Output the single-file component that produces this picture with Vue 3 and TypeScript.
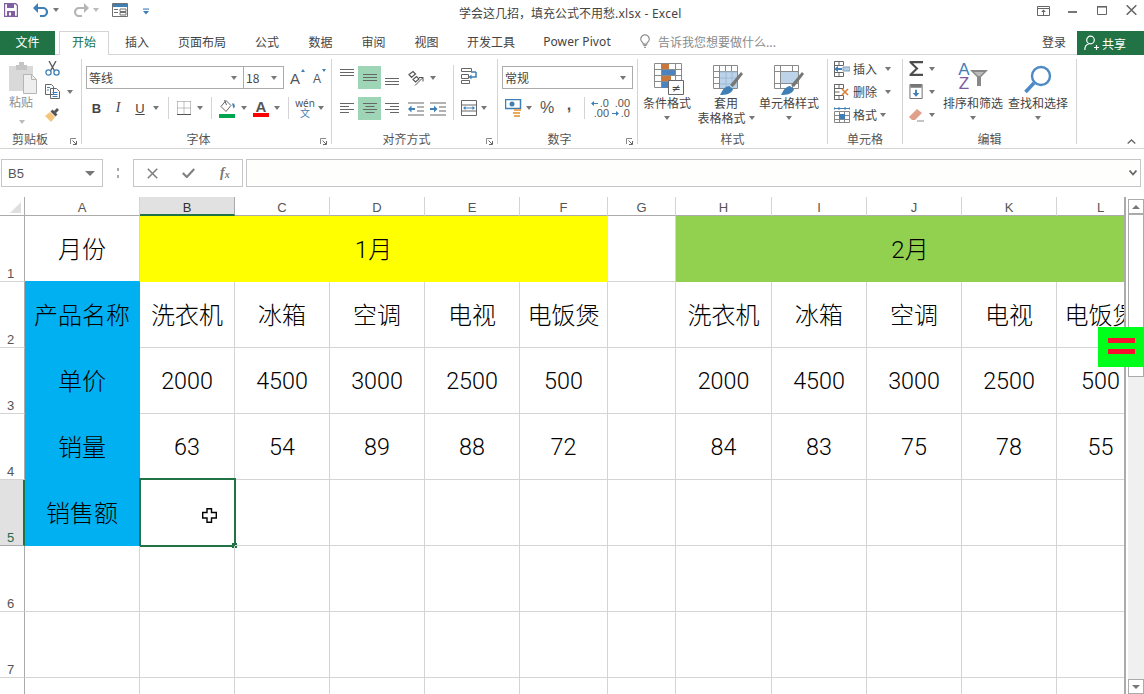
<script setup lang="ts">
interface Cell { t: string; cls: string }

const letters: string[] = ['A', 'B', 'C', 'D', 'E', 'F', 'G', 'H', 'I', 'J', 'K', 'L']
const tabs: { t: string; cls: string }[] = [
  { t: '插入', cls: 'w54' },
  { t: '页面布局', cls: 'w76' },
  { t: '公式', cls: 'w54' },
  { t: '数据', cls: 'w53' },
  { t: '审阅', cls: 'w53' },
  { t: '视图', cls: 'w53' },
  { t: '开发工具', cls: 'w76' },
  { t: 'Power Pivot', cls: 'w96 latin' }
]

const valueCell = (t: string): Cell => ({ t, cls: /^\d+$/.test(t) ? 'num' : '' })

function dataRow(head: string, vals: string[]): Cell[] {
  const cells: Cell[] = [{ t: head, cls: 'blue' }]
  vals.slice(0, 5).forEach((t) => cells.push(valueCell(t)))
  cells.push({ t: '', cls: '' })
  vals.slice(5).forEach((t) => cells.push(valueCell(t)))
  return cells
}
const blank = (): Cell[] => letters.map(() => ({ t: '', cls: '' }))

const products = ['洗衣机', '冰箱', '空调', '电视', '电饭煲']
const rows: Cell[][] = [
  [
    { t: '月份', cls: 'a1' },
    { t: '1月', cls: 'yellow span5' },
    { t: '', cls: '' },
    { t: '2月', cls: 'green span5' }
  ],
  dataRow('产品名称', [...products, ...products]),
  dataRow('单价', ['2000', '4500', '3000', '2500', '500', '2000', '4500', '3000', '2500', '500']),
  dataRow('销量', ['63', '54', '89', '88', '72', '84', '83', '75', '78', '55']),
  [{ t: '销售额', cls: 'blue' }, { t: '', cls: 'selected' }, ...blank().slice(2)],
  blank(),
  blank(),
  blank()
]
</script>

<template>
  <div class="app">
    <header class="titlebar">
      <div class="qat">
        <svg class="q-save" viewBox="0 0 14 14"><path d="M.5.5h11l2 2v11H.5z" fill="#fff" stroke="#80609f" stroke-width="1.4" /><path d="M3 1h7v4H3zM3 8h8v5H3z" fill="#80609f" /><path d="M5 9.5h2v3H5z" fill="#fff" /></svg>
        <svg class="q-undo" viewBox="0 0 15 14"><path d="M4 5h6a4 4 0 0 1 0 8H7" fill="none" stroke="#3f7fb5" stroke-width="2.200" /><path d="M0 5l5-5v10z" fill="#3f7fb5" /></svg>
        <i class="dd q-d1"></i>
        <svg class="q-redo" viewBox="0 0 15 14"><path d="M11 5H5a4 4 0 0 0 0 8h3" fill="none" stroke="#b5b5b5" stroke-width="2.200" /><path d="M15 5l-5-5v10z" fill="#b5b5b5" /></svg>
        <i class="dd light q-d2"></i>
        <svg class="q-form" viewBox="0 0 16 14"><path d="M.5.5h15v13H.5z" fill="#fff" stroke="#707070" /><path d="M1 1h14v3H1z" fill="#3f7fb5" /><path d="M2 6.500h4M2 9.500h4M8 6h6v2.500H8zM8 9.500h6V12H8z" fill="none" stroke="#707070" /></svg>
        <svg class="q-more" viewBox="0 0 7 7"><path d="M0 0h7v1.300H0z" fill="#3f7fb5" /><path d="M0 3h7L3.500 7z" fill="#3f7fb5" /></svg>
      </div>
      <div class="doc-title">学会这几招，填充公式不用愁<span class="doc-ext">.xlsx - Excel</span></div>
      <div class="win">
        <svg class="w-rib" viewBox="0 0 13 10"><path d="M.5.5h12v9H.5zM1 2.500h11" fill="none" stroke="#666" /><path d="M6.500 3.500l2.500 2.500H7v3H6V6H4z" fill="#666" /></svg>
        <svg class="w-min" viewBox="0 0 9 2"><path d="M0 0h9v2H0z" fill="#777" /></svg>
        <svg class="w-max" viewBox="0 0 10 9"><path d="M.5.5h9v8h-9z" fill="none" stroke="#666" /><path d="M0 0h10v1.600H0z" fill="#666" /></svg>
        <svg class="w-close" viewBox="0 0 11 10"><path d="M.7.3l9.600 9.400M10.300 .3L.7 9.700" fill="none" stroke="#666" stroke-width="1.600" /></svg>
      </div>
    </header>

    <nav class="tabs">
      <div class="file">文件</div>
      <div class="tab-on">开始</div>
      <div v-for="tab in tabs" :key="tab.t" class="tab" :class="tab.cls">{{ tab.t }}</div>
      <svg class="bulb" viewBox="0 0 10 14"><path d="M5 .7a4.300 4.300 0 0 0-2.400 7.800c.4.4.6 1 .6 1.600h3.600c0-.6.2-1.200.6-1.600A4.300 4.300 0 0 0 5 .7z" fill="none" stroke="#888" stroke-width="1.100" /><path d="M3.400 11.500h3.200M4 13.300h2" stroke="#888" /></svg>
      <div class="tell">告诉我您想要做什么...</div>
      <div class="login">登录</div>
      <div class="share">
        <svg class="share-ic" viewBox="0 0 15 16"><circle cx="6.500" cy="5" r="3.800" fill="none" stroke="#fff" stroke-width="1.200" /><path d="M.8 15c0-3.400 2-5.600 4-6M10 12.500h5M12.500 10v5" fill="none" stroke="#fff" stroke-width="1.200" /></svg>
        <span>共享</span>
      </div>
    </nav>

    <section class="ribbon">
      <!-- clipboard -->
      <div class="group g-clip">
        <div class="body clip-body">
          <div class="paste">
            <svg class="paste-ic" viewBox="0 0 28 32"><path d="M0 4h24v25H0z" fill="#d9d9d9" /><path d="M7 3h3V0h5v3h3v5H7z" fill="#c4c4c4" /><path d="M14.500 12.500h8l5 5v14h-13z" fill="#eee" stroke="#b5b5b5" /><path d="M22.500 12.500v5h5" fill="none" stroke="#b5b5b5" /></svg>
            <span class="paste-t">粘贴</span>
            <i class="dd light paste-d"></i>
          </div>
          <div class="clip-tools">
            <svg class="ic15" viewBox="0 0 15 15"><path d="M4 0l5.600 10M11 0L5.400 10" stroke="#555" stroke-width="1.300" fill="none" /><circle cx="3.500" cy="11.500" r="2.600" fill="none" stroke="#3f7fb5" stroke-width="1.300" /><circle cx="11.500" cy="11.500" r="2.600" fill="none" stroke="#3f7fb5" stroke-width="1.300" /></svg>
            <div class="copy-row">
              <svg class="ic15" viewBox="0 0 15 15"><path d="M.5.500h6l2 2v8H.5zM5.500 4.500h6l3 3v7h-9z" fill="#fff" stroke="#666" /><path d="M2 3.500h3M2 6h2M7.500 8.500h5M7.500 10.500h5M7.500 12.500h5" stroke="#3f7fb5" /></svg>
              <i class="dd"></i>
            </div>
            <svg class="ic15" viewBox="0 0 15 15"><path d="M0 9l5-4 5 5-4 5z" fill="#f5c57c" /><path d="M5.500 4.500l5 5 2-2-5-5zM9 4l3-3 2 2-3 3z" fill="#555" /></svg>
          </div>
        </div>
        <div class="label pad20">剪贴板<svg class="launch" viewBox="0 0 7 7"><path d="M.5 6V.5H6" fill="none" stroke="#888" /><path d="M2.500 2.500L6 6M6.500 3v3.500H3" fill="none" stroke="#666" /></svg></div>
      </div>

      <!-- font -->
      <div class="group g-font">
        <div class="body">
          <div class="font-top">
            <div class="select font-name"><span>等线</span><i class="dd"></i></div>
            <div class="select font-size"><span>18</span><i class="dd"></i></div>
            <div class="grow"><span class="big-a">A</span><i class="up"></i></div>
            <div class="shrink"><span class="small-a">A</span><i class="down"></i></div>
          </div>
          <div class="font-row">
            <b class="fmt">B</b>
            <em class="fmt serif">I</em>
            <u class="fmt">U</u>
            <i class="dd"></i>
            <i class="vsep"></i>
            <svg class="ic14" viewBox="0 0 14 14"><path d="M.500 .500h13M.500 .500v13M13.500 .500v13M.500 7h13M7 .500v13" fill="none" stroke="#888" stroke-dasharray="1 1" /><path d="M0 13.500h14" stroke="#555" /></svg>
            <i class="dd"></i>
            <i class="vsep"></i>
            <div class="color">
              <svg class="ic16" viewBox="0 0 16 13"><path d="M2 7l5-6 5 5-5 6z" fill="#fff" stroke="#666" /><path d="M5.500 .500l2 5" stroke="#666" /><path d="M13 4h2l1 3-1.500 2z" fill="#3f7fb5" /></svg>
              <i class="bar bar-g"></i>
            </div>
            <i class="dd"></i>
            <div class="color">
              <span class="color-a">A</span>
              <i class="bar bar-r"></i>
            </div>
            <i class="dd"></i>
            <i class="vsep"></i>
            <div class="wen"><span class="wen-t">wén</span><span class="wen-c">文</span></div>
            <i class="dd"></i>
          </div>
        </div>
        <div class="label pad16">字体<svg class="launch" viewBox="0 0 7 7"><path d="M.5 6V.5H6" fill="none" stroke="#888" /><path d="M2.500 2.500L6 6M6.500 3v3.500H3" fill="none" stroke="#666" /></svg></div>
      </div>

      <!-- alignment -->
      <div class="group g-align">
        <div class="body align-body">
          <div class="align-left">
            <div class="al-row">
              <svg class="al" viewBox="0 0 14 23"><path d="M0 3.500h14M0 6.500h14M0 9.500h14" stroke="#666" fill="none" /></svg>
              <div class="al-on"><svg class="al" viewBox="0 0 14 23"><path d="M0 8.500h14M0 11.500h14M0 14.500h14" stroke="#666" fill="none" /></svg></div>
              <svg class="al" viewBox="0 0 14 23"><path d="M0 12.500h14M0 15.500h14M0 18.500h14" stroke="#666" fill="none" /></svg>
              <svg class="ic16" viewBox="0 0 16 16"><path d="M1 4.500l4-3 2.500 2.500-4 3.500zM5 9.500l3.500-3 2.500 2.500-3.500 3z" fill="none" stroke="#555" stroke-width="1.200" /><path d="M7 15.500l8-8M11 7.500h4V11.500" fill="none" stroke="#555" /></svg>
              <i class="dd dd-start"></i>
            </div>
            <div class="al-row">
              <svg class="al" viewBox="0 0 14 23"><path d="M0 6.500h14M0 9.500h9M0 12.500h14M0 15.500h9" stroke="#666" fill="none" /></svg>
              <div class="al-on"><svg class="al" viewBox="0 0 14 23"><path d="M0 6.500h14M2.500 9.500h9M0 12.500h14M2.500 15.500h9" stroke="#666" fill="none" /></svg></div>
              <svg class="al" viewBox="0 0 14 23"><path d="M0 6.500h14M5 9.500h9M0 12.500h14M5 15.500h9" stroke="#666" fill="none" /></svg>
              <svg class="ic16" viewBox="0 0 16 13"><path d="M0 .500h16M9 4.500h7M9 8.500h7M0 12.500h16" stroke="#666" fill="none" /><path d="M7 6.500H2" stroke="#3f7fb5" stroke-width="2" /><path d="M0 6.500l3.500-3.500v7z" fill="#3f7fb5" /></svg>
              <svg class="ic16" viewBox="0 0 16 13"><path d="M0 .500h16M9 4.500h7M9 8.500h7M0 12.500h16" stroke="#666" fill="none" /><path d="M0 6.500h5" stroke="#3f7fb5" stroke-width="2" /><path d="M7.500 6.500L4 3v7z" fill="#3f7fb5" /></svg>
            </div>
          </div>
          <i class="long-sep"></i>
          <div class="align-right">
            <svg class="ic16" viewBox="0 0 16 16"><path d="M.500 .500h10v3h-10zM.500 6.500h7v4h-7zM.500 12.500h8v3h-8z" fill="#fff" stroke="#666" /><path d="M10 4h5M15 4v5h-6" fill="none" stroke="#3f7fb5" stroke-width="1.500" /><path d="M7.500 9l3-2.500v5z" fill="#3f7fb5" /></svg>
            <div class="merge-row">
              <svg class="ic16" viewBox="0 0 16 16"><path d="M.500 .500h15v15H.500zM.500 5h15M.500 11h15" fill="#fff" stroke="#666" /><path d="M3 8h10" stroke="#3f7fb5" /><path d="M2 8l2.500-2v4zM14 8l-2.500-2v4z" fill="#3f7fb5" /></svg>
              <i class="dd"></i>
            </div>
          </div>
        </div>
        <div class="label pad16">对齐方式<svg class="launch" viewBox="0 0 7 7"><path d="M.5 6V.5H6" fill="none" stroke="#888" /><path d="M2.500 2.500L6 6M6.500 3v3.500H3" fill="none" stroke="#666" /></svg></div>
      </div>

      <!-- number -->
      <div class="group g-num">
        <div class="body">
          <div class="select num-sel"><span>常规</span><i class="dd"></i></div>
          <div class="num-row">
            <svg class="ic18" viewBox="0 0 18 18"><path d="M.500 .500h15v9h-15z" fill="#fff" stroke="#3f7fb5" stroke-width="1.500" /><circle cx="7" cy="5" r="2.500" fill="#3f7fb5" /><path d="M9 10h7v2H9zM8 13h7v2H8zM9 16h6v2H9z" fill="#eba85a" /></svg>
            <i class="dd"></i>
            <span class="pct">%</span>
            <span class="comma">,</span>
            <i class="vsep tall"></i>
            <div class="dec"><span>.0</span><span>.00</span><svg class="dec-arrow" viewBox="0 0 7 5"><path d="M0 2.500L3 0v5zM3 2h4v1H3z" fill="#3f7fb5" /></svg></div>
            <div class="dec"><span>.00</span><span>.0</span><svg class="dec-arrow lower" viewBox="0 0 7 5"><path d="M7 2.500L4 0v5zM0 2h4v1H0z" fill="#3f7fb5" /></svg></div>
          </div>
        </div>
        <div class="label pad16">数字<svg class="launch" viewBox="0 0 7 7"><path d="M.5 6V.5H6" fill="none" stroke="#888" /><path d="M2.500 2.500L6 6M6.500 3v3.500H3" fill="none" stroke="#666" /></svg></div>
      </div>

      <!-- styles -->
      <div class="group g-styles">
        <div class="body styles-body">
          <div class="col c58">
            <svg class="big off" viewBox="0 0 30 32"><path d="M.500 .500h27v24h-27zM.500 6.500h27M.500 12.500h27M.500 18.500h27M7.500 .500v24M14.500 .500v24M21.500 .500v24" fill="#fff" stroke="#8a8a8a" /><path d="M8 1h7v5H8zM8 13h9v5H8z" fill="#c9773c" /><path d="M8 7h13v5H8zM8 19h6v6H8z" fill="#4d82bc" /><path d="M14.500 17.500h15v14h-15z" fill="#fff" stroke="#666" /><text x="22" y="29" class="ne">≠</text></svg>
            <span class="cap">条件格式</span>
            <i class="dd cap-d"></i>
          </div>
          <div class="col c60">
            <svg class="big off" viewBox="0 0 30 32"><path d="M.500 2.500h24v23h-24zM.500 8.500h24M.500 14.500h24M.500 20.500h24M6.500 2.500v23M12.500 2.500v23M18.500 2.500v23" fill="#fff" stroke="#8a8a8a" /><path d="M7 9h17v16H7z" fill="#bcd3e9" /><path d="M7 9h17M7 15h17M7 21h17M13 9v16M19 9v16" stroke="#9fbbd6" fill="none" /><path d="M17 22l11-13 2 2-10 13z" fill="#777" /><path d="M7 32c2-3 3-8 9-9l4 3c-1 5-8 6-13 6z" fill="#3f7fb5" /></svg>
            <span class="cap">套用</span>
            <span class="cap cap-row">表格格式<i class="dd"></i></span>
          </div>
          <div class="col c66">
            <svg class="big" viewBox="0 0 30 32"><path d="M.500 2.500h24v23h-24zM.500 8.500h24M.500 20.500h24M6.500 2.500v23M18.500 2.500v23" fill="#fff" stroke="#8a8a8a" /><path d="M7 9h17v11H7z" fill="#bcd3e9" /><path d="M17 22l11-13 2 2-10 13z" fill="#777" /><path d="M7 32c2-3 3-8 9-9l4 3c-1 5-8 6-13 6z" fill="#3f7fb5" /></svg>
            <span class="cap">单元格样式</span>
            <i class="dd cap-d"></i>
          </div>
        </div>
        <div class="label">样式</div>
      </div>

      <!-- cells -->
      <div class="group g-cells">
        <div class="body cells-body">
          <div class="cell-row">
            <svg class="ic16" viewBox="0 0 16 16"><path d="M.500 .500h9v4h-9zM.500 11.500h9v4h-9zM.500 .500v15M5 .500v4M5 11.500v4" fill="#fff" stroke="#666" /><path d="M9 6h7v4H9z" fill="#b8cfe6" stroke="#7f9dbc" /><path d="M0 8l4-3v2h4v2H4v2z" fill="#3f7fb5" /></svg>
            <span class="cell-t">插入</span><i class="dd d-far"></i>
          </div>
          <div class="cell-row">
            <svg class="ic16" viewBox="0 0 16 16"><path d="M.500 .500h9v4h-9zM.500 11.500h9v4h-9zM.500 .500v15M5 .500v4M5 11.500v4M.500 8h5" fill="#fff" stroke="#666" /><path d="M8 5l6 6M14 5l-6 6" stroke="#d9843e" stroke-width="1.700" /></svg>
            <span class="cell-t">删除</span><i class="dd d-far"></i>
          </div>
          <div class="cell-row">
            <svg class="ic16" viewBox="0 0 16 16"><path d="M.500 4.500h15v11H.500zM.500 8.500h15M.500 12.500h15M5.500 4.500v11M10.500 4.500v11" fill="#fff" stroke="#888" /><path d="M5 7h6v5H5z" fill="#3f7fb5" /><path d="M0 1.500h16M0 0v3M16 0v3M5 0v3M11 0v3" stroke="#3f7fb5" /></svg>
            <span class="cell-t">格式</span><i class="dd d-near"></i>
          </div>
        </div>
        <div class="label">单元格</div>
      </div>

      <!-- editing -->
      <div class="group g-edit">
        <div class="body edit-body">
          <div class="edit-left">
            <div class="edit-row">
              <svg class="ic15" viewBox="0 0 15 15"><path d="M.5 0H14v2.200H4l5.500 5.300L4 12.800h10V15H.5v-1.800L6.500 7.500.5 1.800z" fill="#4d4d4d" /></svg>
              <i class="dd"></i>
            </div>
            <div class="edit-row">
              <svg class="ic15" viewBox="0 0 15 16"><path d="M.500 .500h13v15H.500z" fill="#fff" stroke="#666" /><path d="M1 1h12v3H1z" fill="#777" /><path d="M7 6v6" stroke="#3f7fb5" stroke-width="2" /><path d="M3.500 9.500h7L7 13.500z" fill="#3f7fb5" /></svg>
              <i class="dd"></i>
            </div>
            <div class="edit-row">
              <svg class="ic15" viewBox="0 0 15 15"><path d="M0 10l8-8 5 4-7 7H3z" fill="#e0a08a" /><path d="M8 14h7" stroke="#888" /></svg>
              <i class="dd"></i>
            </div>
          </div>
          <div class="col c60b">
            <div class="sort-ic">
              <div class="az"><span class="az-a">A</span><span class="az-z">Z</span></div>
              <svg class="funnel" viewBox="0 0 18 16"><path d="M0 0h18l-7 7v9H7V7z" fill="#888" /><path d="M4 2h10l-4 4H8z" fill="#bbb" /></svg>
            </div>
            <span class="cap">排序和筛选</span>
            <i class="dd cap-d"></i>
          </div>
          <div class="col c60c">
            <svg class="big" viewBox="0 0 30 32"><circle cx="18" cy="13" r="9" fill="none" stroke="#4d8ac4" stroke-width="2.400" /><path d="M11 20L2.500 29" stroke="#4d8ac4" stroke-width="3.600" /></svg>
            <span class="cap">查找和选择</span>
            <i class="dd cap-d"></i>
          </div>
        </div>
        <div class="label">编辑</div>
      </div>

      <div class="collapse-area">
        <svg class="collapse" viewBox="0 0 9 5"><path d="M.7 4.500L4.500 1l3.800 3.500" fill="none" stroke="#666" stroke-width="1.300" /></svg>
      </div>
    </section>

    <div class="fbar">
      <div class="namebox"><span>B5</span><i class="dd dark"></i></div>
      <div class="dots"><i></i><i></i></div>
      <div class="fbtns">
        <svg class="fb-x" viewBox="0 0 11 11"><path d="M.8.8l9.400 9.400M10.200 .8L.8 10.200" stroke="#808080" stroke-width="1.600" /></svg>
        <svg class="fb-v" viewBox="0 0 13 10"><path d="M.8 5l4 4 7.500-8" fill="none" stroke="#808080" stroke-width="2.200" /></svg>
        <span class="fx">f<sub>x</sub></span>
      </div>
      <div class="finput"><svg class="chev" viewBox="0 0 8 6"><path d="M.5.5l3.500 4 3.500-4" fill="none" stroke="#666" stroke-width="1.800" /></svg></div>
    </div>

    <div class="sheet">
      <div class="grid-wrap">
        <div class="grid">
          <div class="corner"><i class="tri"></i></div>
          <div v-for="(l, i) in letters" :key="l" class="colh" :class="{ on: i === 1 }">{{ l }}</div>
          <template v-for="(row, r) in rows" :key="r">
            <div class="rowh" :class="{ on: r === 4 }">{{ r + 1 }}</div>
            <div v-for="(c, k) in row" :key="k" class="cell" :class="c.cls">
              {{ c.t }}
              <div v-if="c.cls === 'selected'" class="sel-box">
                <i class="handle"></i>
                <svg class="cursor" viewBox="0 0 15 15"><path d="M5 .7h4.500v3.800h4.800V10H9.500v4.300H5V10H.7V4.500H5z" fill="#fff" stroke="#000" stroke-width="1.400" /></svg>
              </div>
            </div>
          </template>
        </div>
      </div>
      <div class="vscroll">
        <div class="sb-btn"><i class="sb-up"></i></div>
        <div class="sb-thumb"></div>
        <div class="sb-track"></div>
        <div class="sb-btn"><i class="sb-dn"></i></div>
      </div>
      <div class="equals"><i></i><i></i></div>
    </div>
  </div>
</template>

<style>
html, body { margin: 0; background: #fff; overflow: hidden; }
</style>

<style scoped>
.app {
  position: relative;
  width: 1144px;
  height: 694px;
  overflow: hidden;
  background: #fff;
  font-family: "Noto Sans CJK SC", "Noto Sans", sans-serif;
  font-size: 12px;
  color: #444;
}
i { display: block; }
svg { display: block; flex: none; }

/* dropdown caret */
.dd { width: 0; height: 0; border-left: 3.5px solid transparent; border-right: 3.5px solid transparent; border-top: 4px solid #777; flex: none; }
.dd.light { border-top-color: #bbb; }
.dd.dark { border-left-width: 5px; border-right-width: 5px; border-top-width: 5px; border-top-color: #777; }

/* title bar */
.titlebar { height: 28px; display: flex; align-items: flex-start; }
.qat { width: 459px; flex: none; height: 28px; display: flex; align-items: flex-start; }
.q-save { width: 14px; height: 14px; margin: 3px 0 0 4px; }
.q-undo { width: 15px; height: 14px; margin: 3px 0 0 15px; }
.q-d1 { margin: 8px 0 0 5px; }
.q-redo { width: 15px; height: 14px; margin: 3px 0 0 15px; }
.q-d2 { margin: 8px 0 0 4px; }
.q-form { width: 16px; height: 14px; margin: 3px 0 0 13px; }
.q-more { width: 6px; height: 7px; margin: 8px 0 0 15px; }
.doc-title { line-height: 28px; font-family: "Noto Sans", "Noto Sans CJK SC", sans-serif; font-size: 12px; color: #444; white-space: nowrap; }
.doc-ext { letter-spacing: .25px; }
.win { margin-left: auto; display: flex; align-items: flex-start; padding-right: 7px; }
.w-rib { width: 13px; height: 10px; margin-top: 6px; }
.w-min { width: 9px; height: 2px; margin: 11px 0 0 18px; }
.w-max { width: 10px; height: 9px; margin: 6px 0 0 20px; }
.w-close { width: 11px; height: 10px; margin: 5px 0 0 19px; }

/* tabs */
.tabs { height: 27px; display: flex; align-items: flex-end; box-sizing: border-box; border-bottom: 1px solid #d4d4d4; }
.file { width: 55px; height: 24px; margin-bottom: -1px; background: #217346; color: #fff; line-height: 22px; text-align: center; }
.tab-on { width: 50px; height: 24px; box-sizing: border-box; margin: 0 1px -1px 4px; border: 1px solid #d4d4d4; border-bottom: 0; background: #fff; color: #217346; line-height: 20px; text-align: center; }
.tab { height: 24px; line-height: 21px; text-align: center; margin-bottom: -1px; color: #444; white-space: nowrap; }
.w54 { width: 54px; } .w76 { width: 76px; } .w53 { width: 53px; } .w96 { width: 96px; }
.latin { font-family: "Noto Sans", sans-serif; letter-spacing: .1px; }
.bulb { width: 10px; height: 14px; margin: 0 0 6px 15px; }
.tell { margin-left: 8px; color: #8a8a8a; font-size: 12px; line-height: 21px; height: 24px; margin-bottom: -1px; white-space: nowrap; width: 120px; }
.login { margin-left: 264px; line-height: 21px; height: 24px; margin-bottom: -1px; }
.share { margin-left: 11px; width: 67px; height: 24px; margin-bottom: -1px; background: #217346; color: #fff; display: flex; align-items: center; box-sizing: border-box; padding-left: 7px; }
.share-ic { width: 15px; height: 16px; margin-right: 3px; }

/* ribbon */
.ribbon { height: 94px; box-sizing: border-box; border-bottom: 1px solid #d4d4d4; display: flex; align-items: flex-start; }
.group { height: 85px; margin-top: 4px; box-sizing: border-box; border-right: 1px solid #d4d4d4; display: flex; flex-direction: column; flex: none; position: relative; }
.body { height: 71px; flex: none; }
.label { height: 16px; line-height: 17px; text-align: center; color: #555; position: relative; }
.pad20 { padding-right: 21px; }
.pad16 { padding-right: 16px; }
.launch { position: absolute; width: 7px; height: 7px; right: 4px; top: 8px; }
.g-clip { width: 82px; }
.g-font { width: 250px; }
.g-align { width: 166px; }
.g-num { width: 140px; }
.g-styles { width: 190px; }
.g-cells { width: 75px; }
.g-edit { width: 174px; }
.ic14 { width: 14px; height: 14px; }
.ic15 { width: 15px; height: 15px; }
.ic16 { width: 16px; height: 16px; }
.ic18 { width: 18px; height: 18px; }

.clip-body { display: flex; }
.paste { width: 37px; padding-left: 9px; box-sizing: border-box; display: flex; flex-direction: column; align-items: flex-start; flex: none; }
.paste-ic { width: 28px; height: 32px; margin-top: 3px; }
.paste-t { line-height: 16px; color: #8f8f8f; }
.paste-d { margin: 10px 0 0 10px; }
.clip-tools { margin: 2px 0 0 8px; display: flex; flex-direction: column; gap: 8px; }
.copy-row { display: flex; align-items: center; gap: 7px; width: 30px; }

.font-top { display: flex; align-items: stretch; height: 23px; margin: 7px 0 0 4px; }
.select { box-sizing: border-box; border: 1px solid #ababab; display: flex; align-items: center; justify-content: space-between; background: #fff; height: 23px; padding: 0 6px 0 2px; }
.font-name { width: 158px; }
.font-size { width: 41px; margin-left: -1px; padding-left: 2px; }
.grow, .shrink { position: relative; }
.grow { width: 15px; margin-left: 6px; }
.shrink { width: 13px; margin-left: 8px; }
.big-a { font-family: "Liberation Sans", sans-serif; font-size: 15px; line-height: 25px; color: #555; }
.small-a { font-family: "Liberation Sans", sans-serif; font-size: 12px; line-height: 26px; color: #555; }
.up, .down { position: absolute; top: 3px; right: 0; width: 0; height: 0; border-left: 2.500px solid transparent; border-right: 2.500px solid transparent; }
.up { border-bottom: 3px solid #3f7fb5; }
.down { border-top: 3px solid #3f7fb5; }
.font-row { display: grid; grid-template-columns: 21px 22px 22px 9px 17px 14px 18px 4px 27px 8px 26px 6px 16px 18px 13px; justify-items: center; align-items: center; height: 24px; margin: 7px 0 0 4px; }
.fmt { font-family: "Liberation Sans", sans-serif; font-size: 13px; color: #444; font-style: normal; }
.serif { font-family: "Liberation Serif", serif; font-style: italic; font-size: 14px; }
.vsep { width: 1px; height: 22px; background: #d4d4d4; }
.color { display: flex; flex-direction: column; align-items: center; width: 16px; }
.bar { width: 16px; height: 4px; }
.bar-g { background: #00a64f; }
.bar-r { background: #ff0000; }
.color-a { font-family: "Liberation Sans", sans-serif; font-size: 15px; line-height: 13px; height: 13px; font-weight: 700; color: #555; }
.wen { display: flex; flex-direction: column; align-items: center; line-height: 10px; }
.wen-t { font-size: 10px; font-family: "Noto Sans", sans-serif; color: #555; }
.wen-c { font-size: 10px; color: #3f7fb5; }

.align-body { display: flex; padding: 6px 0 0 4px; box-sizing: border-box; }
.align-left { display: flex; flex-direction: column; gap: 8px; margin-top: 1px; }
.al-row { display: grid; grid-template-columns: 22px 23px 21px 27px 18px; justify-items: center; align-items: center; height: 23px; }
.al { width: 14px; height: 23px; }
.al-on { width: 23px; height: 23px; background: #9fd5b7; display: flex; justify-content: center; }
.dd-start { justify-self: start; margin-left: 1px; }
.long-sep { width: 1px; height: 55px; background: #d4d4d4; margin-left: 6px; }
.align-right { display: flex; flex-direction: column; margin: 3px 0 0 7px; width: 33px; gap: 16px; }
.merge-row { display: flex; align-items: center; gap: 4px; }

.num-sel { width: 131px; margin: 7px 0 0 4px; }
.num-row { display: grid; grid-template-columns: 23px 8px 28px 16px 14px 18px 24px; justify-items: center; align-items: center; height: 24px; margin: 7px 0 0 4px; }
.pct { font-family: "Liberation Sans", sans-serif; font-size: 16px; color: #555; }
.comma { font-family: "Liberation Sans", sans-serif; font-weight: 700; font-size: 16px; line-height: 14px; color: #555; margin-top: -6px; }
.tall { height: 22px; }
.dec { position: relative; width: 18px; display: flex; flex-direction: column; align-items: flex-end; font-family: "Liberation Sans", sans-serif; font-size: 11px; line-height: 10px; color: #555; }
.dec-arrow { position: absolute; left: 0; top: 3px; width: 7px; height: 5px; }
.dec-arrow.lower { top: 13px; }

.styles-body { display: flex; }
.col { display: flex; flex-direction: column; align-items: center; flex: none; }
.c58 { width: 58px; } .c60 { width: 60px; } .c66 { width: 66px; }
.big { width: 30px; height: 32px; margin-top: 4px; }
.big.off { margin-left: 4px; }
.cap { line-height: 15px; white-space: nowrap; color: #444; }
.cap-d { margin-top: 6px; }
.cap-row { display: flex; align-items: center; gap: 3px; }
.ne { font-family: "DejaVu Sans", sans-serif; font-size: 11px; text-anchor: middle; fill: #444; }

.cells-body { height: 71px; padding-left: 6px; box-sizing: border-box; }
.cell-row { display: flex; align-items: center; height: 23px; position: relative; top: -2px; }
.cell-t { margin-left: 3px; }
.d-far { margin-left: 8px; }
.d-near { margin-left: 3px; }

.edit-body { display: flex; }
.edit-left { width: 40px; padding: 2px 0 0 6px; box-sizing: border-box; display: flex; flex-direction: column; gap: 8px; flex: none; }
.edit-row { display: flex; align-items: center; gap: 5px; height: 15px; }
.c60b { width: 60px; } .c60c { width: 60px; margin-left: 5px; }
.sort-ic { display: flex; height: 32px; margin-top: 4px; width: 30px; }
.az { display: flex; flex-direction: column; align-items: center; font-family: "Liberation Sans", sans-serif; font-size: 17px; line-height: 14px; width: 12px; }
.az-a { color: #3f7fb5; }
.az-z { color: #7e5b9c; }
.funnel { width: 18px; height: 16px; margin-top: 7px; }
.collapse-area { flex: 1; display: flex; justify-content: flex-end; padding: 84px 8px 0 0; box-sizing: border-box; }
.collapse { width: 9px; height: 5px; }

/* formula bar */
.fbar { height: 48px; box-sizing: border-box; padding: 10px 0 0 1px; display: flex; align-items: flex-start; }
.namebox { width: 102px; height: 28px; box-sizing: border-box; border: 1px solid #c6c6c6; display: flex; align-items: center; justify-content: space-between; padding: 0 7px 0 6px; font-family: "Liberation Sans", sans-serif; font-size: 13px; color: #555; }
.dots { width: 30px; height: 28px; display: flex; flex-direction: column; align-items: center; justify-content: center; gap: 4px; }
.dots i { width: 2px; height: 3px; background: #aaa; }
.fbtns { width: 110px; height: 28px; box-sizing: border-box; border: 1px solid #c6c6c6; display: flex; align-items: center; padding-left: 13px; }
.fb-x { width: 11px; height: 11px; }
.fb-v { width: 13px; height: 10px; margin-left: 24px; }
.fx { font-family: "Liberation Serif", serif; font-style: italic; font-weight: 700; font-size: 14px; color: #777; margin-left: 25px; line-height: 14px; }
.fx sub { font-size: 10px; vertical-align: baseline; position: relative; top: 1px; }
.finput { width: 895px; height: 28px; margin-left: 3px; box-sizing: border-box; border: 1px solid #c6c6c6; background: #fefefc; display: flex; align-items: center; justify-content: flex-end; padding-right: 3px; }
.chev { width: 8px; height: 6px; }

/* sheet */
.sheet { height: 497px; display: flex; align-items: flex-start; overflow: hidden; }
.grid-wrap { width: 1126px; height: 497px; box-sizing: border-box; border-right: 2px solid #ababab; overflow: hidden; flex: none; }
.grid { display: grid; width: 1145px; grid-template-columns: 25px 115px 95px 95px 95px 95px 88px 68px 96px 95px 95px 95px 88px; grid-template-rows: 19px repeat(8, 66px); }
.corner { box-sizing: border-box; border-right: 1px solid #ababab; border-bottom: 1px solid #ababab; position: relative; }
.tri { position: absolute; right: 3px; bottom: 2px; width: 0; height: 0; border-left: 11px solid transparent; border-bottom: 11px solid #dfdfdf; }
.colh { box-sizing: border-box; border-right: 1px solid #d4d4d4; border-bottom: 1px solid #ababab; text-align: center; line-height: 22px; font-family: "Liberation Sans", sans-serif; font-size: 13px; color: #555; overflow: hidden; }
.colh.on { background: #e1e1e1; border-bottom: 2px solid #217346; border-right-color: #ababab; color: #333; }
.rowh { box-sizing: border-box; border-right: 1px solid #ababab; border-bottom: 1px solid #d4d4d4; display: flex; align-items: flex-end; padding-left: 7px; line-height: 14px; font-family: "Liberation Sans", sans-serif; font-size: 13px; color: #555; }
.rowh.on { background: #e1e1e1; border-right: 2px solid #217346; border-bottom-color: #ababab; color: #2a6a4a; }
.cell { box-sizing: border-box; border-right: 1px solid #d4d4d4; border-bottom: 1px solid #d4d4d4; display: flex; align-items: center; justify-content: center; padding-top: 2px; font-family: "Roboto", "Noto Sans CJK SC", sans-serif; font-size: 24px; line-height: 32px; font-weight: 300; color: #000; white-space: nowrap; position: relative; }
.num { font-size: 23.300px; padding-top: 0; }
.blue { background: #00b0f0; border-color: transparent; }
.a1 { border-bottom-color: #00b0f0; }
.yellow { background: #ff0; border-color: transparent; }
.green { background: #92d050; border-color: transparent; }
.span5 { grid-column: span 5; }
.sel-box { position: absolute; left: -1px; right: -2px; top: -2px; bottom: -2px; border: 2px solid #217346; }
.handle { position: absolute; width: 5px; height: 5px; right: -3px; bottom: -3px; background: #217346; }
.cursor { position: absolute; width: 15px; height: 15px; left: 61px; top: 28px; }

.vscroll { margin: 2px 0 0 2px; width: 16px; height: 495px; flex: none; display: flex; flex-direction: column; background: #f0f0f0; box-sizing: border-box; }
.sb-btn { height: 15px; box-sizing: border-box; border: 1px solid #ababab; background: #fff; display: flex; align-items: center; justify-content: center; flex: none; }
.sb-up { width: 0; height: 0; border-left: 4px solid transparent; border-right: 4px solid transparent; border-bottom: 4px solid #777; }
.sb-dn { width: 0; height: 0; border-left: 4px solid transparent; border-right: 4px solid transparent; border-top: 4px solid #777; }
.sb-thumb { height: 163px; box-sizing: border-box; border: 1px solid #ababab; background: #fff; flex: none; }
.sb-track { flex: 1; }

.equals { position: absolute; left: 1098px; top: 327px; width: 46px; height: 40px; background: #00ff1a; display: flex; flex-direction: column; align-items: flex-start; padding: 11px 0 0 10px; box-sizing: border-box; gap: 6px; }
.equals i { width: 27px; height: 5px; background: #f8102e; }
</style>
